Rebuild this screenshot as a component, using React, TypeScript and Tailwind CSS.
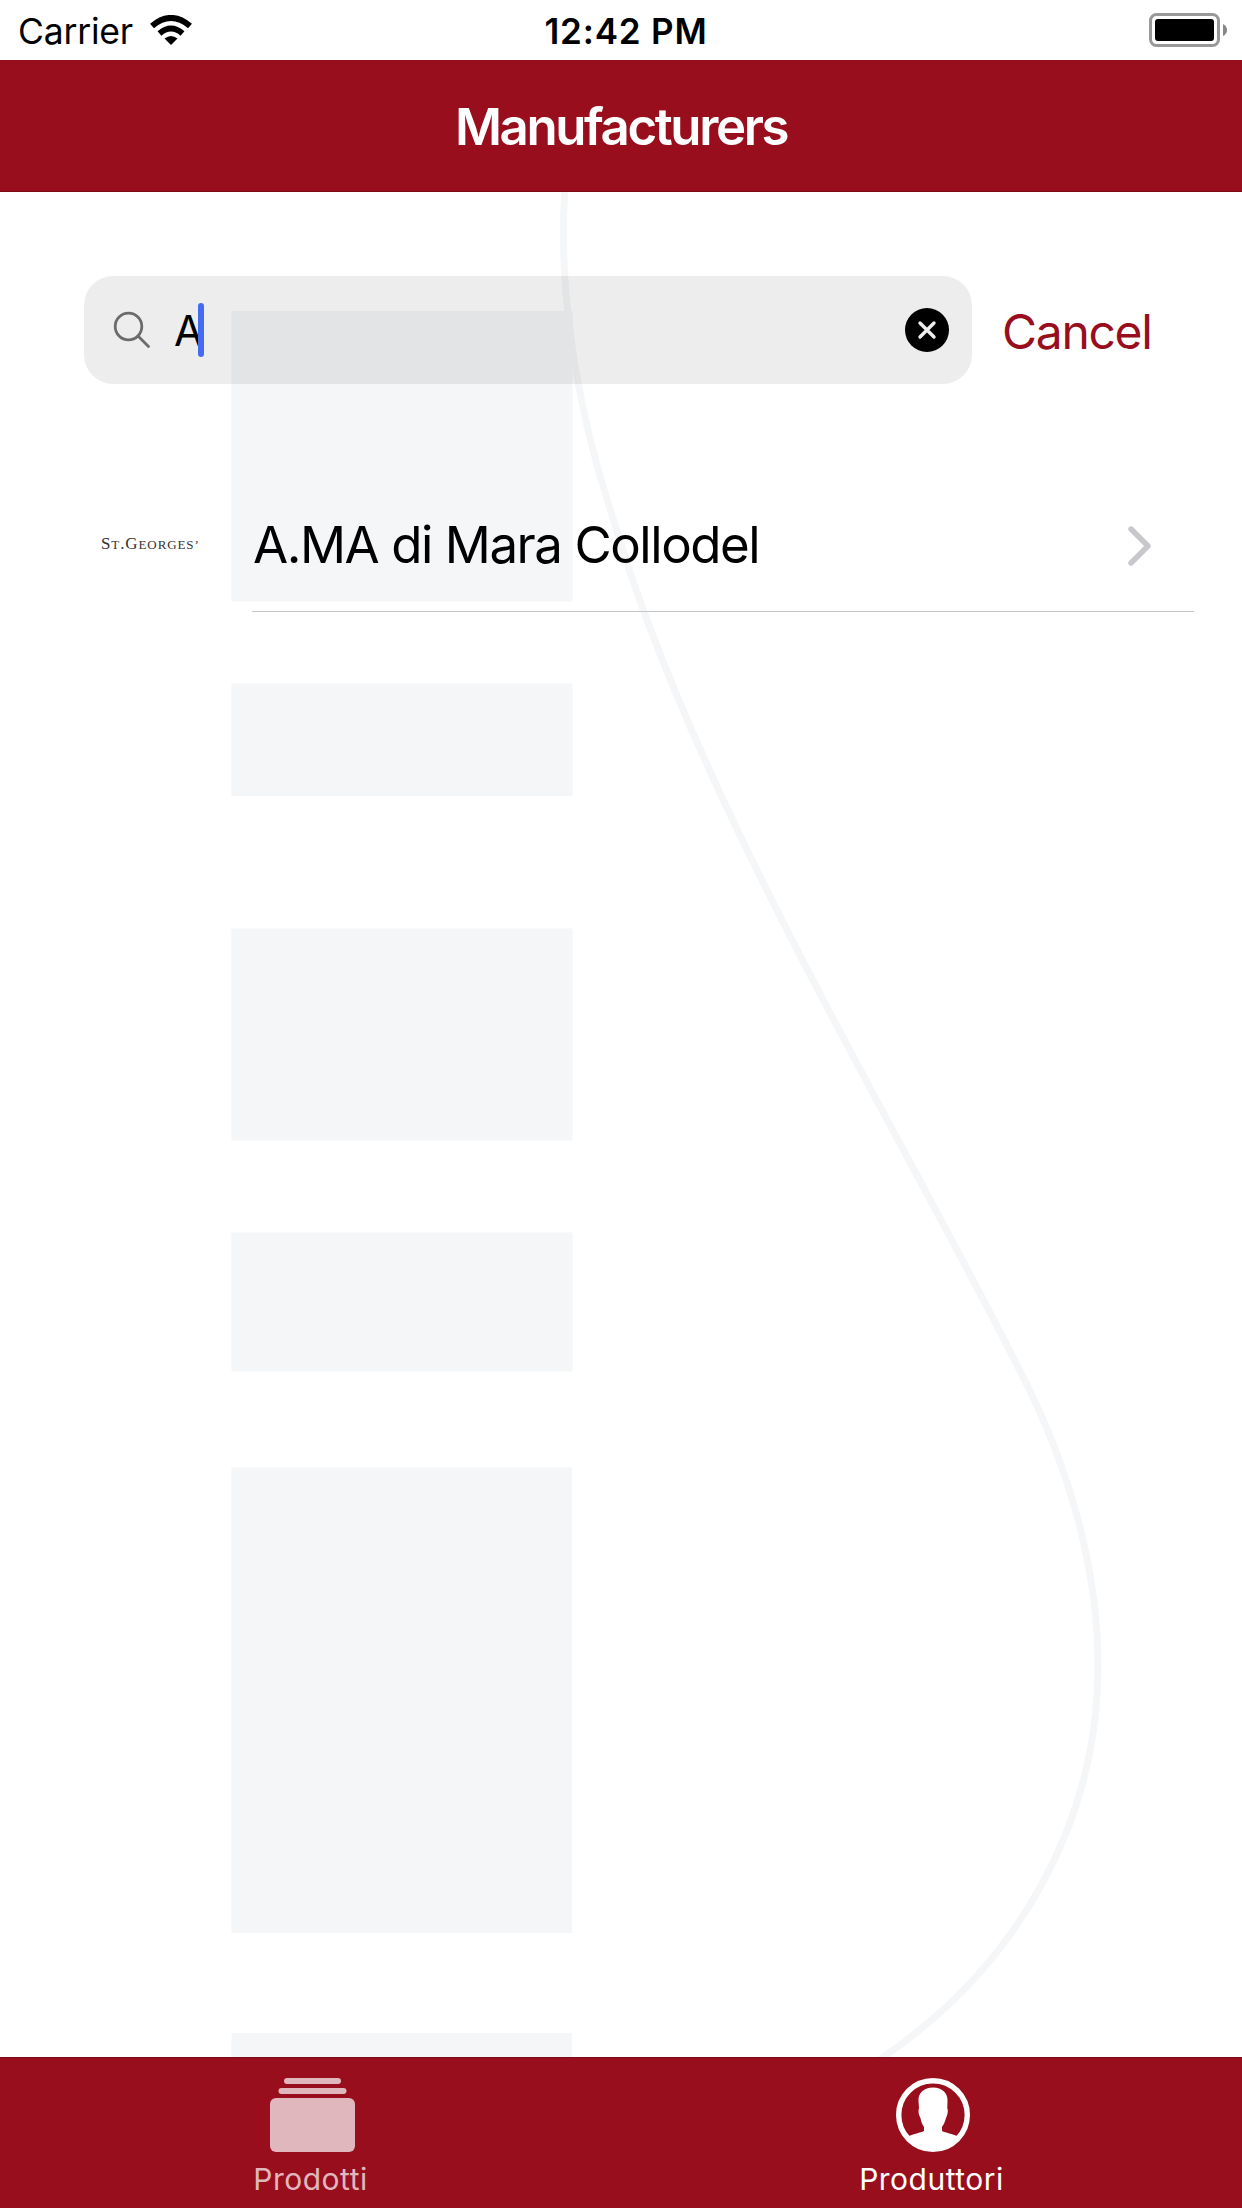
import { useState } from "react";

const TABS = [
  { id: "prodotti", label: "Prodotti" },
  { id: "produttori", label: "Produttori" },
];

const MANUFACTURERS = [{ id: 1, name: "A.MA di Mara Collodel" }];

function WifiIcon() {
  return (
    <svg className="ml-[17px] h-[31px] w-[42px]" viewBox="0 0 42 31">
      <g fill="none" stroke="#000" strokeWidth="6">
        <path d="M2 11 Q21 -5 40 11" />
        <path d="M9.5 18.5 Q21 8.5 32.5 18.5" />
      </g>
      <path d="M14.5 23.5 Q21 18.5 27.5 23.5 L21 30 Z" />
    </svg>
  );
}

function BatteryIcon() {
  return (
    <svg className="h-[34px] w-[78px]" viewBox="0 0 78 34">
      <rect x="1.5" y="1.5" width="68" height="31" rx="6" fill="none" stroke="#999" strokeWidth="3" />
      <rect x="6" y="6" width="59" height="22" rx="3" />
      <path d="M74 11 Q78 13 78 17 Q78 21 74 23 Z" fill="#888" />
    </svg>
  );
}

function StatusBar() {
  return (
    <div className="grid h-[60px] grid-cols-3 items-center bg-white pr-[15px] pl-[18px]">
      <div className="flex items-center">
        <span className="pt-[3px] text-[35.5px] leading-none tracking-[-0.2px]">Carrier</span>
        <WifiIcon />
      </div>
      <span className="pt-[3px] pl-[7px] text-center text-[35px] leading-none font-semibold tracking-[0.8px]">
        12:42 PM
      </span>
      <div className="flex justify-end">
        <BatteryIcon />
      </div>
    </div>
  );
}

function Watermark() {
  return (
    <svg className="absolute inset-0 h-full w-full" viewBox="0 192 1242 1865" fill="#f4f6f8">
      <rect x="231.5" y="311" width="341" height="290.5" />
      <rect x="231.5" y="683.5" width="341" height="112.5" />
      <rect x="231.5" y="928.5" width="341" height="212" />
      <rect x="231.5" y="1232.5" width="341" height="139" />
      <rect x="231.5" y="1467.5" width="340.5" height="465.5" />
      <rect x="231.5" y="2033" width="340.5" height="30" />
      <path
        d="M565 190 C558 280 574 400 612 515 C692 791 885 1104 1017 1365 C1080 1485 1098 1590 1098 1665 C1098 1820 1020 1965 879 2060"
        fill="none"
        stroke="#f4f6f8"
        strokeWidth="7"
      />
    </svg>
  );
}

function SearchBar() {
  const [query, setQuery] = useState("A");

  return (
    <div className="flex items-center">
      <div className="flex h-[108px] w-[888px] items-center rounded-[29px] bg-black/[0.07] pr-[23px] pl-[29px]">
        <svg className="h-[38px] w-[38px]" viewBox="0 0 38 38" fill="none" stroke="#6b6b6b" strokeWidth="2.8" strokeLinecap="round">
          <circle cx="15.5" cy="15.5" r="13.3" />
          <path d="M25 25 L35.5 35.5" />
        </svg>
        <div className="ml-[23px] flex flex-1 items-center">
          <span className="pt-[1px] text-[42px] leading-none">{query}</span>
          <span className="-ml-[5px] h-[54px] w-[6px] rounded-full bg-[#456bf1]" />
        </div>
        <button type="button" aria-label="Clear" onClick={() => setQuery("")}>
          <svg className="h-11 w-11" viewBox="0 0 44 44">
            <circle cx="22" cy="22" r="22" />
            <path d="M15 15 L29 29 M29 15 L15 29" stroke="#eee" strokeWidth="3.4" strokeLinecap="round" />
          </svg>
        </button>
      </div>
      <button type="button" className="ml-[30px] pt-[3px] text-[48px] leading-none tracking-[-1.3px] text-[#980e1d]">
        Cancel
      </button>
    </div>
  );
}

function ManufacturerRow({ name }: { name: string }) {
  return (
    <div className="flex h-[134px] items-stretch">
      <div className="flex w-[168px] items-center pb-[4px] pl-[17px]">
        <span className="font-['Liberation_Serif',serif] text-[17px] leading-none tracking-[0.9px] whitespace-nowrap text-[#333]">
          S<span className="text-[13px]">T</span>.G<span className="text-[13px]">EORGES’</span>
        </span>
      </div>
      <div className="flex flex-1 items-center justify-between border-b border-[#c6c6c8] pr-[42px]">
        <span className="pl-[1px] text-[51px] leading-none tracking-[-1.45px]">{name}</span>
        <svg className="mt-[2px] h-[40px] w-[24px]" viewBox="0 0 24 40" fill="none" stroke="#c7c7cc" strokeWidth="5.4" strokeLinecap="round" strokeLinejoin="round">
          <path d="M3 3 L20 20 L3 37" />
        </svg>
      </div>
    </div>
  );
}

function StackIcon() {
  return (
    <svg className="ml-[3px] h-[74px] w-[85px]" viewBox="0 0 85 74" fill="currentColor">
      <rect x="14" y="0" width="57" height="6" rx="3" />
      <rect x="8.5" y="10" width="68" height="6" rx="3" />
      <rect x="0" y="20" width="85" height="54" rx="6" />
    </svg>
  );
}

function PersonIcon() {
  return (
    <svg className="ml-[3px] h-[74px] w-[74px]" viewBox="0 0 74 74" fill="currentColor">
      <circle cx="37" cy="37" r="34.3" fill="none" stroke="currentColor" strokeWidth="5.4" />
      <path d="M37 9.5 C46 9.5 52 15 51.5 23 L51.3 30 C52.5 33 51.5 37 50 40 C49 44 47.5 47 46 49 V53 C50 55 56 55.5 62 58.5 C56 67 48 72 37 72 C26 72 18 67 12 58.500 C18 55.5 24 55 28 53 V49 C26.5 47 25 44 24.5 40 C22.5 37 22 33 23 30 L22.5 23 C22 15 28 9.5 37 9.5 Z" />
    </svg>
  );
}

function TabBar() {
  const [active, setActive] = useState("produttori");

  return (
    <nav className="grid h-[151px] grid-cols-2 border-t border-[#7c0b17] bg-[#980e1d]">
      {TABS.map((tab) => (
        <button
          key={tab.id}
          type="button"
          onClick={() => setActive(tab.id)}
          className={`flex flex-col items-center pt-[20px] ${
            active === tab.id ? "text-white" : "text-[#e0b7bc]"
          }`}
        >
          {tab.id === "prodotti" ? <StackIcon /> : <PersonIcon />}
          <span className="mt-[12px] text-[30px] leading-none tracking-[0.5px]">{tab.label}</span>
        </button>
      ))}
    </nav>
  );
}

export default function App() {
  return (
    <div className="flex h-[2208px] w-[1242px] flex-col overflow-hidden bg-white font-['Inter',sans-serif] text-black">
      <StatusBar />
      <header className="flex h-[132px] items-center justify-center border-b border-[#7c0b17] bg-[#980e1d]">
        <h1 className="pt-[1px] text-[51px] leading-none font-semibold tracking-[-2.4px] text-white">
          Manufacturers
        </h1>
      </header>
      <main className="relative flex-1">
        <Watermark />
        <div className="relative pt-[84px] pl-[84px]">
          <SearchBar />
          <div className="mt-[94px] mr-[48px]">
            {MANUFACTURERS.map((m) => (
              <ManufacturerRow key={m.id} name={m.name} />
            ))}
          </div>
        </div>
      </main>
      <TabBar />
    </div>
  );
}
